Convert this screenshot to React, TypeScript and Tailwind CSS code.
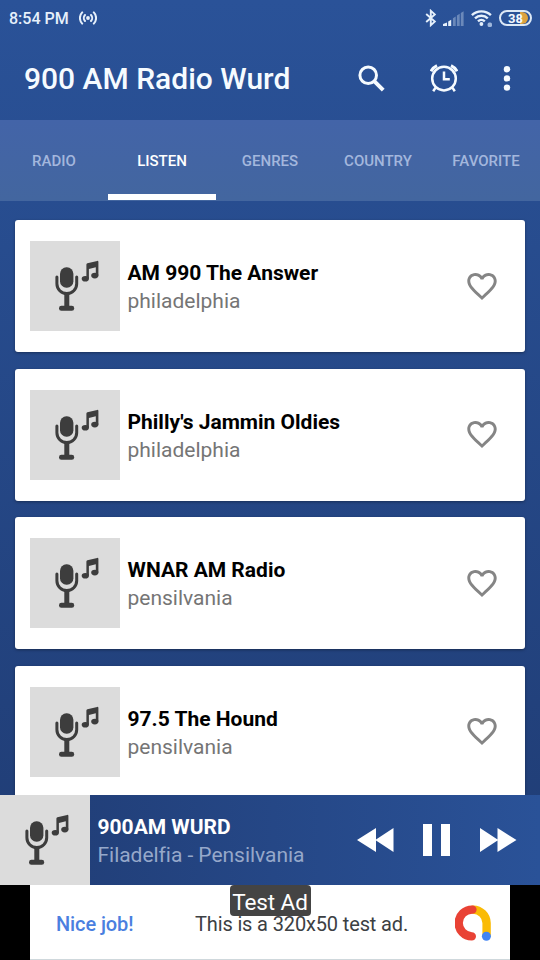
import React from "react";

interface Station {
  name: string;
  city: string;
}

const stations: Station[] = [
  { name: "AM 990 The Answer", city: "philadelphia" },
  { name: "Philly's Jammin Oldies", city: "philadelphia" },
  { name: "WNAR AM Radio", city: "pensilvania" },
  { name: "97.5 The Hound", city: "pensilvania" },
];

const tabs = ["RADIO", "LISTEN", "GENRES", "COUNTRY", "FAVORITE"];

const StationArt: React.FC = () => (
  <svg viewBox="0 0 90 90" className="h-[90px] w-[90px] shrink-0 bg-[#dcdcdc]">
    <g fill="#3d3d3d">
      <rect x="30" y="26.3" width="13.4" height="20.4" rx="6.5" />
      <rect x="34.3" y="53" width="5" height="14" />
      <rect x="29" y="64.8" width="15.2" height="5" rx="2.4" />
      <ellipse cx="55.3" cy="37.7" rx="3.6" ry="2.8" />
      <ellipse cx="64.8" cy="34.6" rx="3.6" ry="2.8" />
      <path d="M56.4 23.6q0-1 1-1.3l9.8-2.4q1.2-.2 1.2 1V34.6h-2.6V26.2l-6.9 1.9V37.7h-2.5z" />
    </g>
    <path
      d="M26.9 36v6.7a9.9 9.9 0 0 0 19.8 0V36"
      fill="none"
      stroke="#3d3d3d"
      strokeWidth="3"
      strokeLinecap="round"
    />
  </svg>
);

const StatusBar: React.FC = () => (
  <div className="flex h-9 shrink-0 items-center pl-[9px] pr-[8px]">
    <span className="pt-px text-[16px] font-medium text-[#e6f0fb]">8:54 PM</span>
    <svg viewBox="0 0 18 14" className="ml-[10px] h-[14px] w-[18px]" fill="none" stroke="#e6f0fb" strokeWidth="2" strokeLinecap="round">
      <circle cx="9" cy="7" r="1.9" fill="#e6f0fb" stroke="none" />
      <path d="M6 4a4.4 4.4 0 0 0 0 6M12 4a4.4 4.4 0 0 1 0 6M3.2 1.4a8 8 0 0 0 0 11.2M14.8 1.4a8 8 0 0 1 0 11.2" />
    </svg>
    <svg viewBox="0 0 12 18" className="ml-auto h-[18px] w-[12px]" fill="none" stroke="#e6f0fb" strokeWidth="1.9">
      <path d="M1.2 5l8.6 7.6-4 3.6V1.8l4 3.6L1.2 13" />
    </svg>
    <svg viewBox="0 0 21 15" className="ml-[6px] h-[15px] w-[21px]" fill="#e6f0fb">
      <path d="M0 15v-2l4-1.6V15zM5.2 15v-4.4l3-1.8V15z" />
      <path d="M9.9 15V7.2l2.8-1.6V15zM13.9 15V4.4l2.8-1.6V15zM17.8 15V2l2.8-1.8V15z" opacity=".35" />
    </svg>
    <svg viewBox="0 0 22 18" className="ml-[7px] h-[18px] w-[22px]" fill="none" stroke="#e6f0fb" strokeWidth="2.4">
      <path d="M.9 6.2a13.6 13.6 0 0 1 19 0M4 9.4a9.2 9.2 0 0 1 12.8 0M7 12.4a5 5 0 0 1 6.8 0" />
      <circle cx="10.4" cy="15" r="1.9" fill="#e6f0fb" stroke="none" />
      <rect x="16.6" y="13.6" width="4.4" height="4.4" rx="1.6" fill="#9fb7dc" stroke="none" />
    </svg>
    <div className="relative ml-[6px] flex h-[16px] w-[33px] items-center justify-center rounded-full border-2 border-[#dce8f6]">
      <span className="absolute inset-y-0 right-[2px] w-[8px] rounded-r-full bg-[#dda23f]" />
      <span className="relative text-[13px] font-bold leading-none text-[#f2f7fd]">38</span>
    </div>
  </div>
);

const AppBar: React.FC = () => (
  <header className="flex h-[84px] shrink-0 items-center pl-6 pr-[30px]">
    <h1 className="pt-[2px] text-[30px] font-medium leading-none text-[#f6fbff]">900 AM Radio Wurd</h1>
    <svg viewBox="0 0 27 27" className="ml-auto h-[27px] w-[27px]" fill="none" stroke="#f6fbff">
      <circle cx="10.2" cy="10.2" r="8.3" strokeWidth="3" />
      <path d="M16.2 16.2l9 9" strokeWidth="4" />
    </svg>
    <svg viewBox="0 0 28 28" className="ml-[45px] h-[28px] w-[28px]" fill="none" stroke="#f6fbff" strokeWidth="2.5">
      <circle cx="14" cy="14.6" r="11.8" />
      <path d="M14 7.6v7.6h5.8M5.6 23.6l-2.4 3.6M22.4 23.6l2.4 3.6" />
      <path d="M1 7.2a13 13 0 0 1 6-5.6M27 7.2a13 13 0 0 0-6-5.6" strokeWidth="3" />
    </svg>
    <svg viewBox="0 0 6 25" className="ml-[46px] h-[25px] w-[6px] overflow-visible" fill="#f6fbff">
      <circle cx="3" cy="3.2" r="3.2" />
      <circle cx="3" cy="12.4" r="3.2" />
      <circle cx="3" cy="21.6" r="3.2" />
    </svg>
  </header>
);

const StationCard: React.FC<{ data: Station }> = ({ data }) => (
  <div className="flex h-[132px] shrink-0 items-center rounded-[3px] bg-white pl-[15px] pr-[28.5px] shadow-[0_1px_3px_rgba(0,0,0,0.35)]">
    <StationArt />
    <div className="ml-[7.5px] min-w-0 flex-1 pt-[3px]">
      <p className="text-[21px] font-bold leading-[28px] text-black">{data.name}</p>
      <p className="text-[21px] leading-[29px] text-[#757575]">{data.city}</p>
    </div>
    <svg viewBox="2 3 20 18.35" className="h-[27px] w-[30px]" fill="#858585">
      <path d="M16.5 3c-1.74 0-3.41.81-4.5 2.09C10.91 3.81 9.24 3 7.5 3 4.42 3 2 5.42 2 8.5c0 3.78 3.4 6.86 8.55 11.54L12 21.35l1.45-1.32C18.6 15.36 22 12.28 22 8.5 22 5.42 19.58 3 16.5 3zm-4.4 15.55l-.1.1-.1-.1C7.14 14.24 4 11.39 4 8.5 4 6.5 5.5 5 7.5 5c1.54 0 3.04.99 3.57 2.36h1.87C13.46 5.99 14.96 5 16.5 5c2 0 3.5 1.5 3.5 3.5 0 2.89-3.14 5.74-7.9 10.05z" />
    </svg>
  </div>
);

const Player: React.FC = () => (
  <div className="flex h-[90px] shrink-0 items-center bg-linear-to-r from-[#203c74] to-[#2a5298] pr-[23px]">
    <StationArt />
    <div className="ml-[7.5px] flex-1 pt-[2px]">
      <p className="text-[21px] font-bold leading-[28px] text-white">900AM WURD</p>
      <p className="text-[21px] leading-[29px] tracking-[-0.04px] text-[#96a8ca]">Filadelfia - Pensilvania</p>
    </div>
    <svg viewBox="0 0 37 24" className="h-[24px] w-[37px]" fill="#fff">
      <path d="M0 12L19 0v11.4L36.5 0v24L19 12.6V24z" />
    </svg>
    <svg viewBox="0 0 27 32" className="ml-[29px] h-[32px] w-[27px]" fill="#fff">
      <path d="M0 0h9v32H0zM18 0h9v32h-9z" />
    </svg>
    <svg viewBox="0 0 37 24" className="ml-[30px] h-[24px] w-[37px]" fill="#fff">
      <path d="M36.5 12L17.5 0v11.4L0 0v24l17.5-11.4V24z" />
    </svg>
  </div>
);

const AdBanner: React.FC = () => (
  <div className="flex h-[75px] shrink-0 justify-center bg-black">
    <div className="relative flex w-[480px] items-center border-b border-[#cfd8dc] bg-white pl-[26px] pr-[19px]">
      <span className="w-[139px] pt-[3px] text-[20px] font-medium tracking-[-0.1px] text-[#4a7fe0]">Nice job!</span>
      <span className="whitespace-nowrap pt-[3px] text-[20px] tracking-[-0.14px] text-[#3c4043]">
        This is a 320x50 test ad.
      </span>
      <svg viewBox="0 0 36 36" className="ml-auto mt-px h-[36px] w-[36px]" fill="none" strokeWidth="8.4" strokeLinecap="round">
        <path d="M18 4.6A13.6 13.6 0 0 1 31.6 18v12" stroke="#fabb05" />
        <path d="M17.4 4.6a13.2 13.2 0 1 0-.6 26.8" stroke="#e94235" />
        <circle cx="31.4" cy="31.2" r="4.5" fill="#4285f4" />
      </svg>
      <div className="absolute left-[199.5px] top-0 flex h-[30.5px] w-[81px] items-center justify-center rounded-[4px] bg-[#444] pt-[3px] text-[22.5px] leading-none tracking-[-0.1px] text-white">
        Test Ad
      </div>
    </div>
  </div>
);

const App: React.FC = () => {
  return (
    <div className="flex h-[960px] w-[540px] flex-col overflow-hidden bg-linear-to-b from-[#2a5298] to-[#1f3b72] font-['Roboto',sans-serif]">
      <StatusBar />
      <AppBar />
      <nav className="grid h-[81px] shrink-0 grid-cols-5 bg-linear-to-b from-[#4364a8] to-[#43669f]">
        {tabs.map((tab) => (
          <div
            key={tab}
            className={`relative flex items-center justify-center pt-px text-[15px] font-medium ${
              tab === "LISTEN" ? "text-white" : "text-[#a3b7dd]"
            }`}
          >
            {tab}
            {tab === "LISTEN" && <span className="absolute inset-x-0 bottom-[1.5px] h-[6px] bg-white" />}
          </div>
        ))}
      </nav>
      <main className="flex min-h-0 flex-1 flex-col gap-[16.5px] overflow-hidden px-[15px] pt-[19.4px]">
        {stations.map((station) => (
          <StationCard key={station.name} data={station} />
        ))}
      </main>
      <Player />
      <AdBanner />
    </div>
  );
};

export default App;
